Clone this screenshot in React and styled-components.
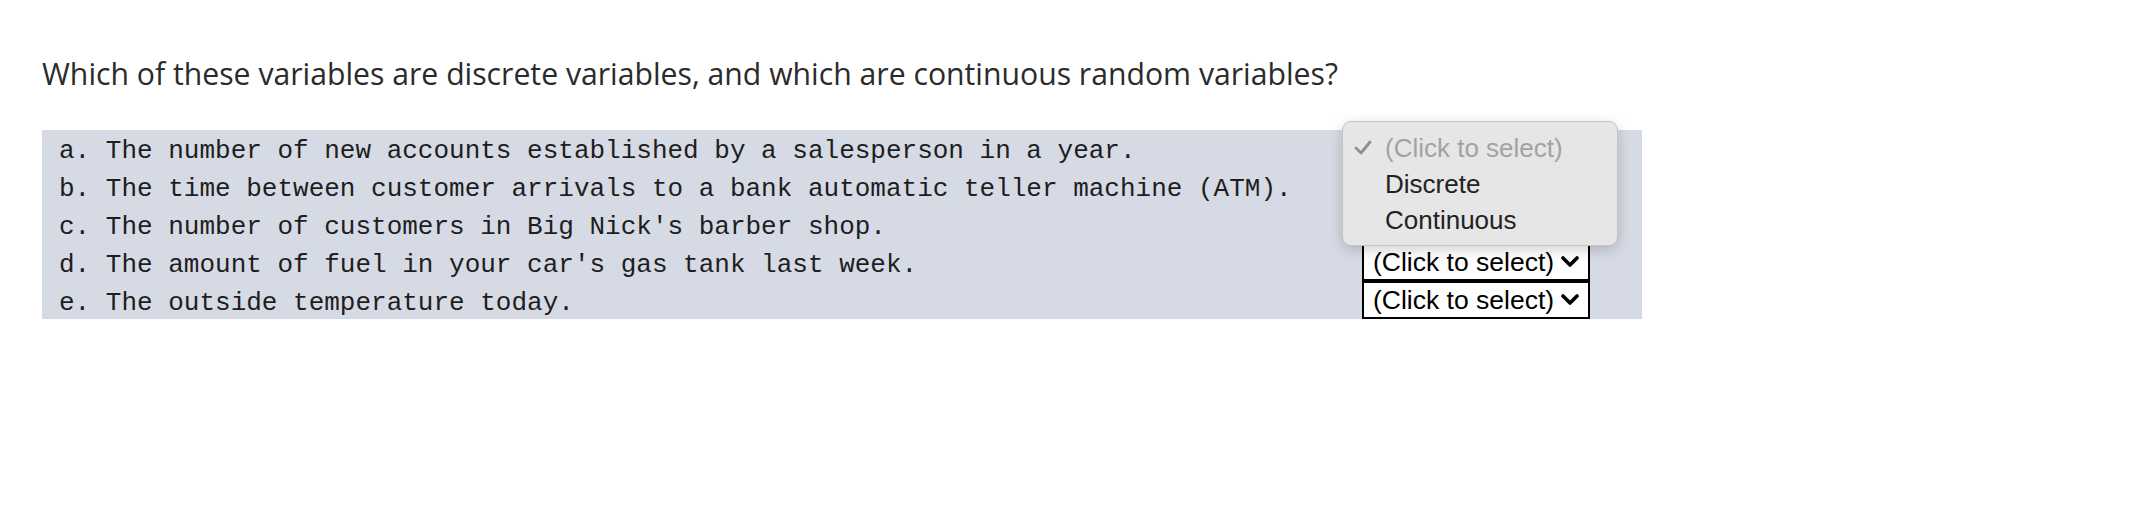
import React from "react";
import styled, {createGlobalStyle} from "styled-components";

const GlobalStyle = createGlobalStyle`
    body {
        margin: 0;
        background: #ffffff;
    }
`;

const Page = styled.div`
    padding: 55px 42px 0 42px;
    width: 1600px;
`;

const Heading = styled.h1`
    margin: 0 0 37px 0;

    font-family: "Open Sans", "Liberation Sans", sans-serif;
    font-size: 30.2px;
    font-weight: 400;
    line-height: 38px;
    color: #2b2b2b;
`;

const Table = styled.div`
    display: flex;
    flex-direction: column;

    background-color: #d6dae4;
`;

const Row = styled.div`
    display: grid;
    grid-template-columns: 1fr 280px;
    align-items: center;

    height: 37.8px;
`;

const Statement = styled.div`
    padding: 5px 0 0 17px;

    font-family: "Liberation Mono", "Courier New", monospace;
    font-size: 26px;
    color: #1e1e1e;
    white-space: pre;
`;

const SelectCell = styled.div`
    position: relative;

    display: flex;
    align-items: center;

    height: 100%;
`;

const SelectBox = styled.div`
    display: flex;
    align-items: center;
    justify-content: space-between;

    box-sizing: border-box;
    width: 228px;
    height: 38px;
    padding: 0 9px 0 9px;

    border: 2px solid #000000;
    background: #ffffff;

    font-family: "Liberation Sans", Arial, sans-serif;
    font-size: 26.5px;
    color: #000000;
`;

const Popup = styled.div`
    position: absolute;
    top: -9px;
    left: -20px;
    z-index: 2;

    box-sizing: border-box;
    width: 276px;
    height: 125px;
    padding: 8px 0 0 0;

    border: 1px solid #c4c4c4;
    border-radius: 9px;
    background: #e6e6e6;
    box-shadow: 0 4px 14px rgba(0, 0, 0, 0.18);

    font-family: "Liberation Sans", Arial, sans-serif;
    font-size: 26px;
`;

const Option = styled.div`
    position: relative;

    display: flex;
    align-items: center;

    height: 36px;
    padding-left: 42px;

    color: ${({muted}) => (muted ? "#a2a2a2" : "#222222")};
`;

const Check = styled.svg`
    position: absolute;
    left: 11px;
    top: 10px;
`;

const items = [
    "a. The number of new accounts established by a salesperson in a year.",
    "b. The time between customer arrivals to a bank automatic teller machine (ATM).",
    "c. The number of customers in Big Nick's barber shop.",
    "d. The amount of fuel in your car's gas tank last week.",
    "e. The outside temperature today."
];

function Chevron() {
    return (
        <svg width="18" height="12" viewBox="0 0 18 12">
            <polyline points="2,2 9,9 16,2" fill="none" stroke="#000" strokeWidth="3.6" strokeLinecap="round" strokeLinejoin="round"/>
        </svg>
    );
}

// the open menu of the first select, lying over the rows below it
function Dropdown() {
    return (
        <Popup>
            <Option muted>
                <Check width="18" height="16" viewBox="0 0 18 16">
                    <polyline points="2,8 7,13 16,2" fill="none" stroke="#8f8f8f" strokeWidth="2.8" strokeLinecap="round" strokeLinejoin="round"/>
                </Check>
                (Click to select)
            </Option>
            <Option>Discrete</Option>
            <Option>Continuous</Option>
        </Popup>
    );
}

export default function App() {
    return (
        <Page>
            <GlobalStyle/>
            <Heading>Which of these variables are discrete variables, and which are continuous random variables?</Heading>
            <Table>
                {items.map((text, index) => (
                    <Row key={text}>
                        <Statement>{text}</Statement>
                        <SelectCell>
                            {index > 2 && (
                                <SelectBox>
                                    <span>(Click to select)</span>
                                    <Chevron/>
                                </SelectBox>
                            )}
                            {index === 0 && <Dropdown/>}
                        </SelectCell>
                    </Row>
                ))}
            </Table>
        </Page>
    );
}
